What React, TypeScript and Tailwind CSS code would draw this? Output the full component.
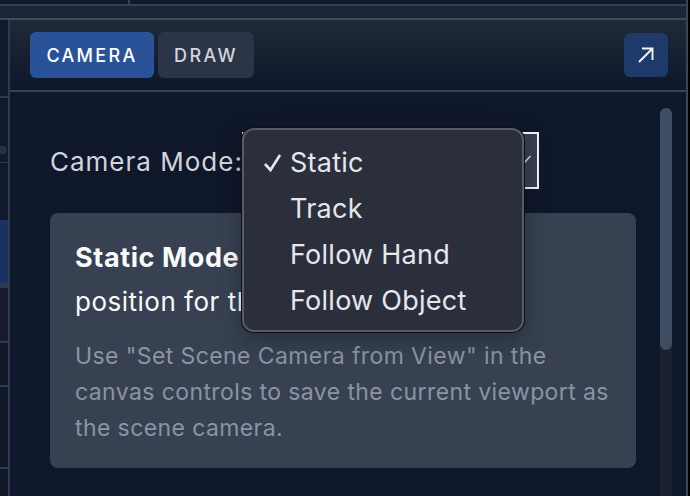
const sans = "font-['Inter','Liberation_Sans',sans-serif]";

const modes = ["Static", "Track", "Follow Hand", "Follow Object"];

function LeftStrip() {
  // thin slice of the neighbouring panel
  return (
    <div className="flex w-[10px] shrink-0 flex-col border-r-2 border-[#2d3a50] bg-[#0f172a]">
      <div className="h-[78px] border-b-2 border-[#2d3a50] bg-[#111a2c]" />
      <div className="flex h-[65px] items-end border-b border-[#2d3a50] bg-[#111a2c] pb-[8px]">
        <div className="h-[8px] w-[7px] rounded-r-full bg-[#263246]" />
      </div>
      <div className="h-[57px] bg-[#111a2c]" />
      <div className="h-[63px] bg-[#1a3263]" />
      <div className="h-[5px] bg-[#2d3a50]" />
      <div className="h-[55px] border-b-2 border-[#2d3a50] bg-[#1a1a30]" />
      <div className="h-[44px] border-b-2 border-[#2d3a50] bg-[#101828]" />
      <div className="h-[82px] border-b-2 border-[#2d3a50] bg-[#101828]" />
      <div className="flex-1 bg-[#101828]" />
    </div>
  );
}

export default function App() {
  return (
    <div className={`${sans} relative h-[496px] w-[690px] overflow-hidden bg-black`}>
      <div className="flex h-full w-[688px] flex-col border-r-2 border-[#3a4558] bg-[#0f172a]">
        {/* top slice of the window */}
        <div className="flex h-[6px] shrink-0 border-b-2 border-[#374151] bg-[#111a2c]">
          <div className="w-[130px] border-r-2 border-[#374151]" />
        </div>
        <div className="h-[14px] shrink-0 border-b-2 border-[#3f4a5c] bg-[#1d2637]" />

        <div className="flex min-h-0 flex-1">
          <LeftStrip />

          <div className="flex min-w-0 flex-1 flex-col">
            <div className="flex h-[72px] shrink-0 items-center justify-between border-b-2 border-[#374151] bg-gradient-to-b from-[#1f2937] to-[#0f172a] pl-[20px] pr-[18px]">
              <div className="flex gap-[4px]">
                <button className="h-[46px] w-[124px] rounded-[6px] bg-[#2a5298] text-[18px] font-medium tracking-[2.3px] text-white">
                  CAMERA
                </button>
                <button className="h-[46px] w-[96px] rounded-[6px] bg-[#2b3547] text-[18px] font-medium tracking-[2.4px] text-[#d1d5db]">
                  DRAW
                </button>
              </div>
              <button className="flex h-[44px] w-[44px] items-center justify-center rounded-[6px] bg-[#1e3a6b]">
                <svg width="16" height="16" viewBox="0 0 16 16" fill="none" stroke="#f3f4f6" strokeWidth="1.9">
                  <path d="M1 15 L14 2" />
                  <path d="M4 1.5 H14.5 V13" />
                </svg>
              </button>
            </div>

            <div className="flex min-h-0 flex-1">
              <div className="min-w-0 flex-1 pl-[40px] pr-[24px] pt-[40px]">
                <div className="flex items-center gap-[1px]">
                  <span className="mt-[2px] w-[191px] shrink-0 whitespace-nowrap text-[26px] tracking-[1px] text-[#d1d5db]">Camera Mode:</span>
                  <div className="flex h-[57px] w-[297px] shrink-0 items-center justify-end border-2 border-[#f3f4f6] bg-[#374151] pr-[4px]">
                    <svg width="14" height="14" viewBox="0 0 14 14" fill="none" stroke="#d1d5db" strokeWidth="1.6">
                      <path d="M0 3 L5 9 L11.5 2" />
                    </svg>
                  </div>
                </div>
                <div className="mt-[24px] rounded-[8px] bg-[#374151] px-[25px] pb-[22px] pt-[23px]">
                  <p className="whitespace-nowrap text-[26px] leading-[44px] tracking-[0.5px] text-[#f9fafb]">
                    <strong className="text-[27px] font-bold tracking-[0.6px]">Static Mode</strong>: Fixed camera
                    <br />
                    position for the scene.
                  </p>
                  <p className="mt-[14px] text-[23px] leading-[36px] tracking-[0.4px] text-[#8b94a3]">
                    Use "Set Scene Camera from View" in the canvas controls to save the current viewport as the scene camera.
                  </p>
                </div>
              </div>
              <div className="w-[26px] shrink-0 pr-[14px] pt-[16px]">
                <div className="h-full rounded-t-full bg-[#1a2232]">
                  <div className="h-[242px] rounded-full bg-[#3f4d63]" />
                </div>
              </div>
            </div>
          </div>
        </div>
      </div>

      {/* open select menu */}
      <ul className="absolute left-[242px] top-[128px] h-[204px] w-[282px] rounded-[12px] border-2 border-[#565b66] bg-[#2b2f3b] pb-[10px] pt-[10px] text-[27px] tracking-[0.25px] text-[#e5e7eb] shadow-[0_0_0_1px_#0b0f1a,0_8px_24px_rgba(0,0,0,0.3)]">
        {modes.map((m, i) => (
          <li key={m} className="flex h-[46px] items-center">
            <span className="flex w-[46px] justify-end pr-[7px]">
              {i === 0 && (
                <svg width="20" height="20" viewBox="0 0 20 20" fill="none" stroke="#e5e7eb" strokeWidth="2.6">
                  <path d="M2 11 L7.5 17 L17 2" />
                </svg>
              )}
            </span>
            {m}
          </li>
        ))}
      </ul>
    </div>
  );
}
